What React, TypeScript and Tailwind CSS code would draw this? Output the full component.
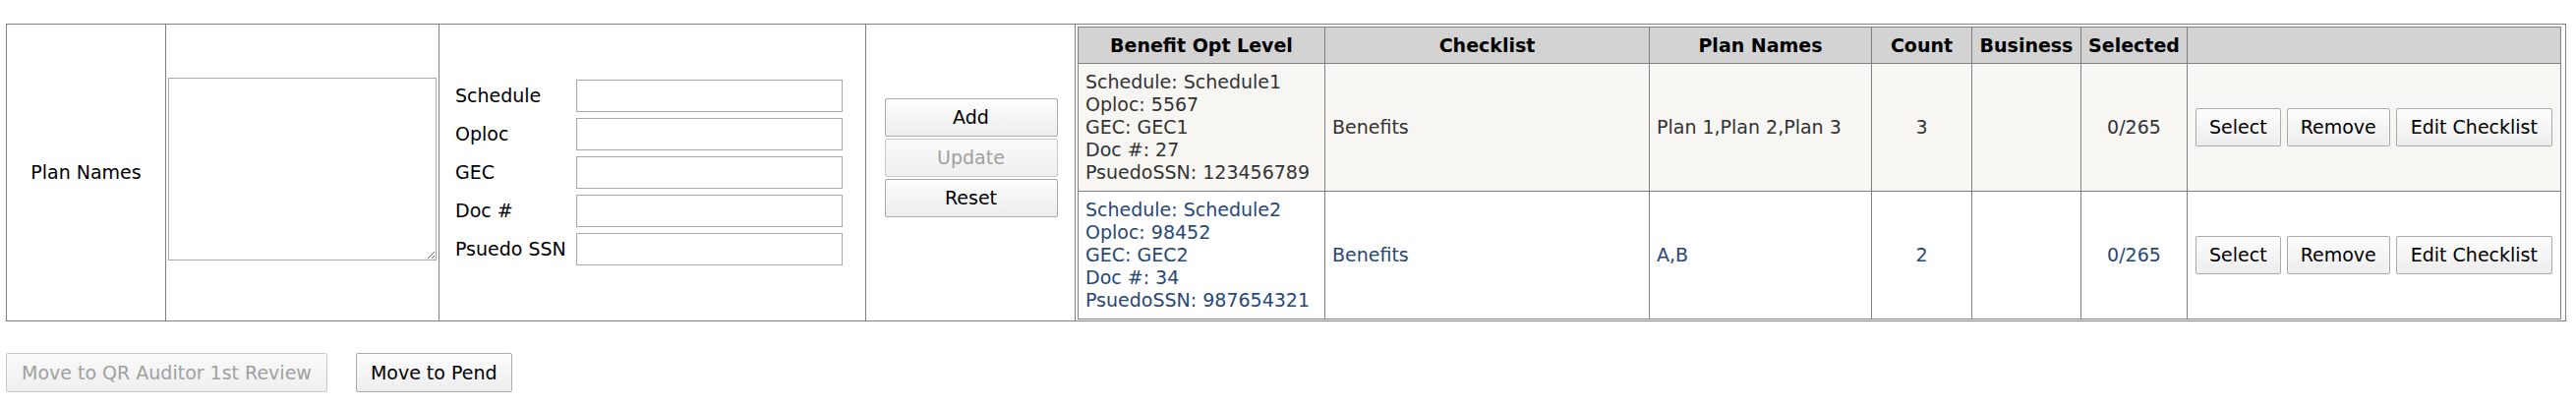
import React from "react";

const gridRows = [
  {
    id: 1,
    schedule: "Schedule1",
    oploc: "5567",
    gec: "GEC1",
    doc: "27",
    ssn: "123456789",
    checklist: "Benefits",
    plans: "Plan 1,Plan 2,Plan 3",
    count: 3,
    business: "",
    selected: "0/265",
  },
  {
    id: 2,
    schedule: "Schedule2",
    oploc: "98452",
    gec: "GEC2",
    doc: "34",
    ssn: "987654321",
    checklist: "Benefits",
    plans: "A,B",
    count: 2,
    business: "",
    selected: "0/265",
  },
];

const formFields = ["Schedule", "Oploc", "GEC", "Doc #", "Psuedo SSN"];

const headers = [
  { label: "Benefit Opt Level", width: "w-[251px]" },
  { label: "Checklist", width: "w-[330px]" },
  { label: "Plan Names", width: "w-[226px]" },
  { label: "Count", width: "w-[102px]" },
  { label: "Business", width: "w-[111px]" },
  { label: "Selected", width: "w-[108px]" },
  { label: "", width: "w-[380px]" },
];

type BtnProps = {
  children: React.ReactNode;
  disabled?: boolean;
  className?: string;
};

const Btn: React.FC<BtnProps> = ({ children, disabled, className = "" }) => (
  <button
    disabled={disabled}
    className={`border rounded-[2px] bg-linear-to-b whitespace-nowrap ${
      disabled
        ? "border-[#c8c8c8] text-[#a0a0a0] from-[#fafafa] to-[#efefef]"
        : "border-[#ababab] text-black from-[#fdfdfd] to-[#ededed]"
    } ${className}`}
  >
    {children}
  </button>
);

const App: React.FC = () => {
  return (
    <div className="min-h-screen bg-white font-['DejaVu_Sans',Verdana,sans-serif] text-[19px] leading-[23px] text-black pt-[24px] pl-[6px]">
      <div className="flex w-[2604px] h-[303px] border border-[#808080]">
        <div className="w-[162px] shrink-0 border-r border-[#808080] flex items-center justify-center">
          Plan Names
        </div>

        <div className="w-[278px] shrink-0 border-r border-[#808080] flex items-center pl-[2px] pb-[7px]">
          <textarea className="w-[273px] h-[186px] border border-[#a9a9a9] bg-white resize-y outline-none" />
        </div>

        <div className="w-[434px] shrink-0 border-r border-[#808080] flex items-center pl-[16px]">
          <div className="grid grid-cols-[auto_271px] items-center gap-x-[10px] gap-y-[6px]">
            {formFields.map((f) => (
              <React.Fragment key={f}>
                <span className="whitespace-nowrap">{f}</span>
                <input
                  type="text"
                  className="h-[33px] w-[271px] border border-[#a9a9a9] bg-white outline-none"
                />
              </React.Fragment>
            ))}
          </div>
        </div>

        <div className="w-[213px] shrink-0 border-r border-[#808080] flex items-center justify-center pb-[31px] pl-[1px]">
          <div className="flex flex-col gap-[2px] w-[176px]">
            <Btn className="h-[39px]">Add</Btn>
            <Btn className="h-[39px]" disabled>
              Update
            </Btn>
            <Btn className="h-[39px]">Reset</Btn>
          </div>
        </div>

        <div className="flex-1 pl-[2px] pr-[4px] pt-[2px]">
          <table className="w-[1509px] table-fixed border-collapse">
            <colgroup>
              {headers.map((h, i) => (
                <col key={i} className={h.width} />
              ))}
            </colgroup>
            <thead>
              <tr className="bg-[#d3d3d3]">
                {headers.map((h, i) => (
                  <th
                    key={i}
                    className="border border-[#808080] pt-[7px] pb-[6px] px-[2px] font-bold text-center whitespace-nowrap"
                  >
                    {h.label}
                  </th>
                ))}
              </tr>
            </thead>
            <tbody>
              {gridRows.map((r, idx) => (
                <tr
                  key={r.id}
                  className={
                    idx % 2 === 0
                      ? "bg-[#f7f6f3] text-[#333333]"
                      : "bg-white text-[#284775]"
                  }
                >
                  <td className="border border-[#808080] py-[7px] px-[7px] align-middle whitespace-nowrap">
                    <div>Schedule: {r.schedule}</div>
                    <div>Oploc: {r.oploc}</div>
                    <div>GEC: {r.gec}</div>
                    <div>Doc #: {r.doc}</div>
                    <div>PsuedoSSN: {r.ssn}</div>
                  </td>
                  <td className="border border-[#808080] px-[7px] align-middle">
                    {r.checklist}
                  </td>
                  <td className="border border-[#808080] px-[7px] align-middle whitespace-nowrap">
                    {r.plans}
                  </td>
                  <td className="border border-[#808080] px-[7px] align-middle text-center">
                    {r.count}
                  </td>
                  <td className="border border-[#808080] px-[7px] align-middle">
                    {r.business}
                  </td>
                  <td className="border border-[#808080] px-[7px] align-middle text-center">
                    {r.selected}
                  </td>
                  <td className="border border-[#808080] pl-[8px] pr-[7px] align-middle">
                    <div className="flex gap-[6px]">
                      <Btn className="h-[39px] px-[13px]">Select</Btn>
                      <Btn className="h-[39px] px-[13px]">Remove</Btn>
                      <Btn className="h-[39px] px-[14px]">Edit Checklist</Btn>
                    </div>
                  </td>
                </tr>
              ))}
            </tbody>
          </table>
        </div>
      </div>

      <div className="flex gap-[29px] mt-[32px]">
        <Btn className="h-[40px] px-[15px]" disabled>
          Move to QR Auditor 1st Review
        </Btn>
        <Btn className="h-[40px] px-[14px]">Move to Pend</Btn>
      </div>
    </div>
  );
};

export default App;
